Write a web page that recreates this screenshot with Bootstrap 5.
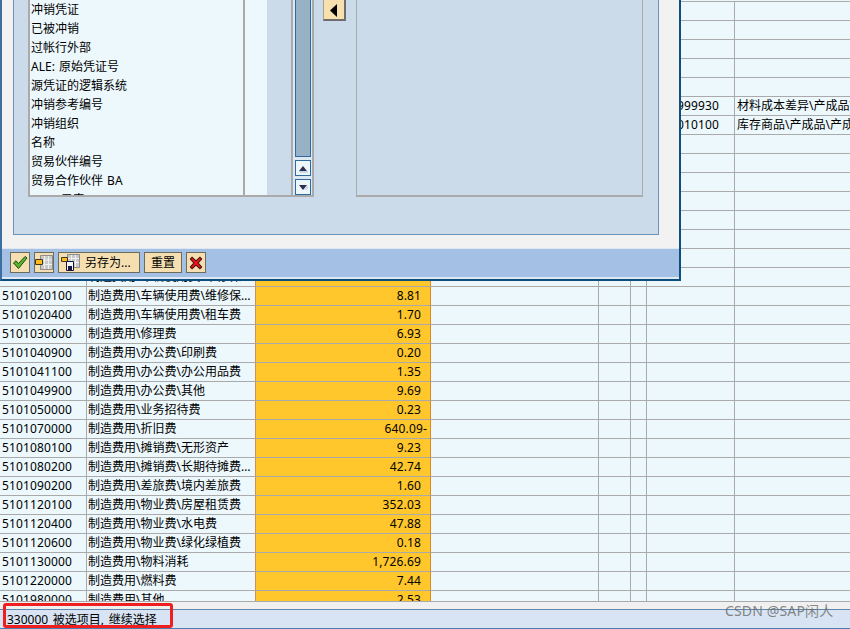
<!DOCTYPE html>
<html lang="zh">
<head>
<meta charset="utf-8">
<title>SAP</title>
<link href="https://cdn.jsdelivr.net/npm/bootstrap@5.3.0/dist/css/bootstrap.min.css" rel="stylesheet">
<style>
html,body{height:100%;margin:0;overflow:hidden}
body{font-family:"Noto Sans","Noto Sans CJK SC",sans-serif;font-size:12px;line-height:18px;color:#000;background:#f0f0f0}
.sap-page{position:relative;width:850px;height:629px;overflow:hidden}
.grid-wrap{height:601px;overflow:hidden;padding-top:1px;background:#edf8fd}
.grid-tbl{width:850px;table-layout:fixed;border-collapse:separate;border-spacing:0;border-top:1px solid #aaa;margin:0}
.grid-tbl td{height:19px;padding:0 0 0 2px;border-width:0 1px 1px 0;border-style:solid;border-color:#aaa;background:#edf8fd;color:#000;white-space:nowrap;overflow:hidden;line-height:18px;box-shadow:none;font-size:12px}
.grid-tbl td:first-child{letter-spacing:.14px}
.grid-tbl td.key{padding-left:1px;border-right-color:#c9925a}
.grid-tbl td.amt{background:#ffc72c;text-align:right;padding:0 9px 0 0;border-right-color:#e08a1e;letter-spacing:.14px}
.grid-tbl td.acct{text-align:right;padding-right:15px;letter-spacing:.14px}
.grid-tbl td:last-child{border-right:0}
.neg{margin-right:-6px}
.status-gap{height:8px;border-top:1px solid #aaa;background:#f0f0f0}
.status-bar{height:20px;border-top:1px solid #5f87ab;border-bottom:1px solid #4a7cae;background:#d8e4f3;padding-left:7px;line-height:19px;word-spacing:1.5px}
.red-mark{position:absolute;left:3px;top:603px;width:170px;height:25px;border:3px solid #f01f1f;border-radius:3px}
.wm{position:absolute;left:725px;top:601px;font-size:14px;line-height:20px;letter-spacing:.15px;color:rgba(105,105,105,.8);white-space:nowrap}
.sap-dialog{position:absolute;left:0;top:0;width:681px;height:281px;background:#f2f2f2;border-left:2px solid #3a6f9f;border-right:2px solid #0c4f7e;border-bottom:2px solid #0c4f7e}
.dlg-body{height:248px;padding:0 20px 0 11px}
.dlg-panel{height:235px;background:#ccdbea;border:1px solid #6b94b8;border-top:0;padding:0 15px 0 14px}
.pick-box{height:197px;width:287px;border:2px solid #aaa;border-top:0;overflow:hidden;background:#ccdbea}
.pick-list{width:214px;background:#edf8fd}
.pick-row{height:19px;line-height:20px;padding-left:1px;white-space:nowrap;word-spacing:1px}
.pick-mid{width:24px;background:#edf8fd;border-left:2px solid #aaa}
.pick-gap{width:24px}
.pick-scroll{width:21px;border-left:2px solid #aaa;padding:0 2px;background:#dde8f2;gap:3px}
.thumb{width:16px;background:#96b2c4;border:1px solid #2e6a9e;border-top:0}
.scr-btn{width:16px;height:16px;flex:none;background:#edf6fb;border:1px solid #2e6a9e;padding:0;border-radius:0}
.scr-btn svg{display:block;margin:3px auto 0}
.move-col{width:42px;padding:0 10px 0 9px}
.move-btn{display:block;width:23px;height:21px;padding:0;border-radius:0;background:#f5e0ae;border:1px solid #a8a38f;border-top:0;border-right:2px solid #6d6d6d;border-bottom:2px solid #6d6d6d}
.move-btn svg{display:block;margin:0 auto}
.right-box{height:197px;width:288px;border:1px solid #aaa;border-top:0;border-bottom-width:2px}
.dlg-tools{height:31px;background:#a4c0e4;border-top:1px solid #dfe9f5;border-bottom:2px solid #dfe9f5;padding:3px 0 0 8px;gap:4px}
.tool-btn{height:21px;padding:0;border-radius:0;background:#f5dfb0;border:1px solid #6b6b5e;color:#000;font-size:12px;line-height:18px;display:flex;align-items:center;justify-content:center;white-space:nowrap}
.tool-btn:hover{background:#f5dfb0}
.w-ico{width:20px}
.w-save{width:82px;justify-content:flex-start;padding-left:2px;gap:5px}
.w-reset{width:38px}
</style>
</head>
<body>
<div class="sap-page">
  <div class="grid-wrap">
    <table class="table grid-tbl">
      <colgroup><col style="width:87px"><col style="width:169px"><col style="width:175px"><col style="width:168px"><col style="width:32px"><col style="width:16px"><col style="width:88px"><col></colgroup>
      <tbody>
        <tr><td></td><td class="key"></td><td class="amt"></td><td></td><td></td><td></td><td></td><td></td></tr>
        <tr><td></td><td class="key"></td><td class="amt"></td><td></td><td></td><td></td><td></td><td></td></tr>
        <tr><td></td><td class="key"></td><td class="amt"></td><td></td><td></td><td></td><td></td><td></td></tr>
        <tr><td></td><td class="key"></td><td class="amt"></td><td></td><td></td><td></td><td></td><td></td></tr>
        <tr><td></td><td class="key"></td><td class="amt"></td><td></td><td></td><td></td><td></td><td></td></tr>
        <tr><td></td><td class="key"></td><td class="amt"></td><td></td><td></td><td></td><td class="acct">999930</td><td>材料成本差异\产成品\产成品</td></tr>
        <tr><td></td><td class="key"></td><td class="amt"></td><td></td><td></td><td></td><td class="acct">010100</td><td>库存商品\产成品\产成品</td></tr>
        <tr><td></td><td class="key"></td><td class="amt"></td><td></td><td></td><td></td><td></td><td></td></tr>
        <tr><td></td><td class="key"></td><td class="amt"></td><td></td><td></td><td></td><td></td><td></td></tr>
        <tr><td></td><td class="key"></td><td class="amt"></td><td></td><td></td><td></td><td></td><td></td></tr>
        <tr><td></td><td class="key"></td><td class="amt"></td><td></td><td></td><td></td><td></td><td></td></tr>
        <tr><td></td><td class="key"></td><td class="amt"></td><td></td><td></td><td></td><td></td><td></td></tr>
        <tr><td></td><td class="key"></td><td class="amt"></td><td></td><td></td><td></td><td></td><td></td></tr>
        <tr><td></td><td class="key"></td><td class="amt"></td><td></td><td></td><td></td><td></td><td></td></tr>
        <tr><td></td><td class="key">制造费用\车辆使用费\维修保…</td><td class="amt"></td><td></td><td></td><td></td><td></td><td></td></tr>
        <tr><td>5101020100</td><td class="key">制造费用\车辆使用费\维修保…</td><td class="amt">8.81</td><td></td><td></td><td></td><td></td><td></td></tr>
        <tr><td>5101020400</td><td class="key">制造费用\车辆使用费\租车费</td><td class="amt">1.70</td><td></td><td></td><td></td><td></td><td></td></tr>
        <tr><td>5101030000</td><td class="key">制造费用\修理费</td><td class="amt">6.93</td><td></td><td></td><td></td><td></td><td></td></tr>
        <tr><td>5101040900</td><td class="key">制造费用\办公费\印刷费</td><td class="amt">0.20</td><td></td><td></td><td></td><td></td><td></td></tr>
        <tr><td>5101041100</td><td class="key">制造费用\办公费\办公用品费</td><td class="amt">1.35</td><td></td><td></td><td></td><td></td><td></td></tr>
        <tr><td>5101049900</td><td class="key">制造费用\办公费\其他</td><td class="amt">9.69</td><td></td><td></td><td></td><td></td><td></td></tr>
        <tr><td>5101050000</td><td class="key">制造费用\业务招待费</td><td class="amt">0.23</td><td></td><td></td><td></td><td></td><td></td></tr>
        <tr><td>5101070000</td><td class="key">制造费用\折旧费</td><td class="amt"><span class="neg">640.09-</span></td><td></td><td></td><td></td><td></td><td></td></tr>
        <tr><td>5101080100</td><td class="key">制造费用\摊销费\无形资产</td><td class="amt">9.23</td><td></td><td></td><td></td><td></td><td></td></tr>
        <tr><td>5101080200</td><td class="key">制造费用\摊销费\长期待摊费…</td><td class="amt">42.74</td><td></td><td></td><td></td><td></td><td></td></tr>
        <tr><td>5101090200</td><td class="key">制造费用\差旅费\境内差旅费</td><td class="amt">1.60</td><td></td><td></td><td></td><td></td><td></td></tr>
        <tr><td>5101120100</td><td class="key">制造费用\物业费\房屋租赁费</td><td class="amt">352.03</td><td></td><td></td><td></td><td></td><td></td></tr>
        <tr><td>5101120400</td><td class="key">制造费用\物业费\水电费</td><td class="amt">47.88</td><td></td><td></td><td></td><td></td><td></td></tr>
        <tr><td>5101120600</td><td class="key">制造费用\物业费\绿化绿植费</td><td class="amt">0.18</td><td></td><td></td><td></td><td></td><td></td></tr>
        <tr><td>5101130000</td><td class="key">制造费用\物料消耗</td><td class="amt">1,726.69</td><td></td><td></td><td></td><td></td><td></td></tr>
        <tr><td>5101220000</td><td class="key">制造费用\燃料费</td><td class="amt">7.44</td><td></td><td></td><td></td><td></td><td></td></tr>
        <tr><td>5101980000</td><td class="key">制造费用\其他</td><td class="amt">2.53</td><td></td><td></td><td></td><td></td><td></td></tr>
      </tbody>
    </table>
  </div>
  <div class="status-gap"></div>
  <div class="status-bar">330000 被选项目, 继续选择</div>

  <div class="sap-dialog d-flex flex-column">
    <div class="dlg-body">
      <div class="dlg-panel d-flex align-items-start">
        <div class="pick-box d-flex">
          <div class="pick-list">
            <div class="pick-row">冲销凭证</div>
            <div class="pick-row">已被冲销</div>
            <div class="pick-row">过帐行外部</div>
            <div class="pick-row">ALE: 原始凭证号</div>
            <div class="pick-row">源凭证的逻辑系统</div>
            <div class="pick-row">冲销参考编号</div>
            <div class="pick-row">冲销组织</div>
            <div class="pick-row">名称</div>
            <div class="pick-row">贸易伙伴编号</div>
            <div class="pick-row">贸易合作伙伴 BA</div>
            <div class="pick-row">WBS 元素</div>
          </div>
          <div class="pick-mid"></div>
          <div class="pick-gap"></div>
          <div class="pick-scroll d-flex flex-column">
            <div class="thumb flex-grow-1"></div>
            <button class="btn scr-btn" type="button" aria-label="上"><svg width="10" height="7" viewBox="0 0 10 7"><path d="M5 0 9 5H1z" fill="#2b3050"/><path d="M1 5h9v2H2z" fill="#c9d9ea"/></svg></button>
            <button class="btn scr-btn" type="button" aria-label="下"><svg width="10" height="7" viewBox="0 0 10 7"><path d="M1 0h8L5 5z" fill="#2b3050"/><path d="M6 5 9 1h1v3z" fill="#c9d9ea"/></svg></button>
          </div>
        </div>
        <div class="move-col">
          <button class="btn move-btn" type="button" aria-label="左移"><svg width="10" height="18" viewBox="0 0 10 18"><path d="M8 3v13L1 9.500z" fill="#000"/></svg></button>
        </div>
        <div class="right-box"></div>
      </div>
    </div>
    <div class="dlg-tools d-flex align-items-start">
      <button class="btn tool-btn w-ico" type="button" aria-label="确认"><svg width="16" height="15" viewBox="0 0 16 15"><path d="M1.500 8 4 5.800 6.500 8.500 13 1.500 15 3 6.500 13.500z" fill="#58b52a" stroke="#1d4a12" stroke-width="1"/></svg></button>
      <button class="btn tool-btn w-ico" type="button" aria-label="布局"><svg width="18" height="16" viewBox="0 0 18 16"><path d="M5.500.5h12v14h-12z" fill="#c9c9c9" stroke="#8d8d8d"/><path d="M9.500 1v13M13.500 1v13M6 5h11M6 9.500h11" stroke="#f1f1f1"/><path d="M.5 4.500h7v5h-7z" fill="#ffb81f" stroke="#3c3c1a"/></svg></button>
      <button class="btn tool-btn w-save" type="button"><svg width="19" height="17" viewBox="0 0 19 17"><path d="M6.500.5h12v13h-12z" fill="#c9c9c9" stroke="#8d8d8d"/><path d="M10.500 1v12M14.500 1v12M7 4.500h11M7 8.500h11" stroke="#f1f1f1"/><path d="M.5 3.500h6v4h-6z" fill="#ffb81f" stroke="#3c3c1a"/><path d="M5.500 7.500h7v9h-7z" fill="#f4f4f4" stroke="#16163c"/><path d="M7 12h4v4H7z" fill="#16163c"/></svg><span>另存为...</span></button>
      <button class="btn tool-btn w-reset" type="button">重置</button>
      <button class="btn tool-btn w-ico" type="button" aria-label="取消"><svg width="14" height="14" viewBox="0 0 16 16"><path d="M1.500 3.500 3.500 1.500 8 5.500 12.500 1.500 14.500 3.500 10.500 8 14.500 12.500 12.500 14.500 8 10.500 3.500 14.500 1.500 12.500 5.500 8z" fill="#e8141c" stroke="#4a1010" stroke-width="1.200"/></svg></button>
    </div>
  </div>

  <div class="red-mark"></div>
  <div class="wm">CSDN @SAP闲人</div>
</div>
<script src="https://cdn.jsdelivr.net/npm/bootstrap@5.3.0/dist/js/bootstrap.bundle.min.js"></script>
</body>
</html>
